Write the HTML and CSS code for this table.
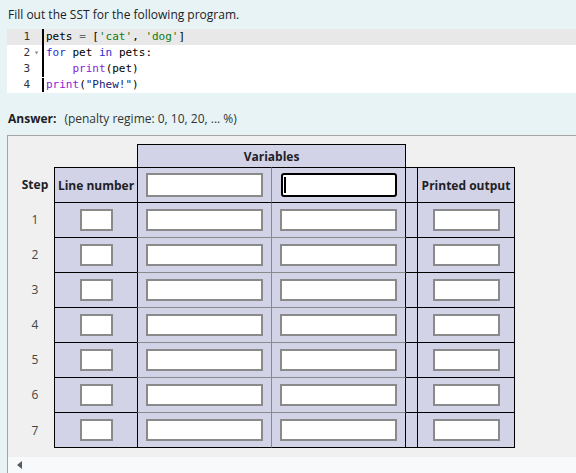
FILE: index.html
```
<!DOCTYPE html>
<html lang="en">
<head>
<meta charset="utf-8">
<title>SST question</title>
<link rel="stylesheet" href="styles.css">
</head>
<body>
<div class="page">
  <p class="prompt">Fill out the SST for the following program.</p>
  <div class="code">
    <div class="ln active"><span class="gut">1</span><span class="src"><span class="id">pets</span> <span class="op">=</span> [<span class="str">'cat'</span>, <span class="str">'dog'</span>]</span></div>
    <div class="ln"><span class="gut">2<span class="fold">▾</span></span><span class="src"><span class="kw">for</span> <span class="id">pet</span> <span class="kw">in</span> <span class="id">pets</span>:</span></div>
    <div class="ln"><span class="gut">3</span><span class="src">    <span class="fn">print</span>(pet)</span></div>
    <div class="ln last"><span class="gut">4</span><span class="src"><span class="fn">print</span>(<span class="str2">"Phew!"</span>)</span></div>
  </div>
  <div class="answer"><b>Answer:</b><span class="penalty">(penalty regime: 0, 10, 20, ... %)</span></div>
  <div class="box">
    <div class="scroller">
      <table class="sst">
        <colgroup>
          <col class="c-step"><col class="c-line"><col class="c-var"><col class="c-var2"><col class="c-gap"><col class="c-out">
        </colgroup>
        <tr class="r-top">
          <td></td><td></td><th colspan="2" class="vars">Variables</th><td></td><td></td>
        </tr>
        <tr class="r-head">
          <th class="step">Step</th>
          <th class="line">Line number</th>
          <td class="v1"><input class="in in-var in-head" type="text"></td>
          <td class="v2"><span class="focus"><input class="in in-var in-head in-focus" type="text"><span class="caret"></span></span></td>
          <td class="gap"></td>
          <th class="out">Printed output</th>
        </tr>
        <tr class="r-data first">
          <td class="step">1</td><td class="line"><input class="in in-line" type="text"></td><td class="v1"><input class="in in-var" type="text"></td><td class="v2"><input class="in in-var" type="text"></td><td class="gap"></td><td class="out"><input class="in in-out" type="text"></td>
        </tr>
        <tr class="r-data">
          <td class="step">2</td><td class="line"><input class="in in-line" type="text"></td><td class="v1"><input class="in in-var" type="text"></td><td class="v2"><input class="in in-var" type="text"></td><td class="gap"></td><td class="out"><input class="in in-out" type="text"></td>
        </tr>
        <tr class="r-data">
          <td class="step">3</td><td class="line"><input class="in in-line" type="text"></td><td class="v1"><input class="in in-var" type="text"></td><td class="v2"><input class="in in-var" type="text"></td><td class="gap"></td><td class="out"><input class="in in-out" type="text"></td>
        </tr>
        <tr class="r-data">
          <td class="step">4</td><td class="line"><input class="in in-line" type="text"></td><td class="v1"><input class="in in-var" type="text"></td><td class="v2"><input class="in in-var" type="text"></td><td class="gap"></td><td class="out"><input class="in in-out" type="text"></td>
        </tr>
        <tr class="r-data">
          <td class="step">5</td><td class="line"><input class="in in-line" type="text"></td><td class="v1"><input class="in in-var" type="text"></td><td class="v2"><input class="in in-var" type="text"></td><td class="gap"></td><td class="out"><input class="in in-out" type="text"></td>
        </tr>
        <tr class="r-data">
          <td class="step">6</td><td class="line"><input class="in in-line" type="text"></td><td class="v1"><input class="in in-var" type="text"></td><td class="v2"><input class="in in-var" type="text"></td><td class="gap"></td><td class="out"><input class="in in-out" type="text"></td>
        </tr>
        <tr class="r-data last">
          <td class="step">7</td><td class="line"><input class="in in-line" type="text"></td><td class="v1"><input class="in in-var" type="text"></td><td class="v2"><input class="in in-var" type="text"></td><td class="gap"></td><td class="out"><input class="in in-out" type="text"></td>
        </tr>
      </table>
    </div>
    <div class="hbar"><span class="arrow"></span></div>
  </div>
</div>
</body>
</html>
```

FILE: styles.css
```
html, body {
  margin: 0;
  padding: 0;
  background: #e7f3f5;
  overflow: hidden;
}
body {
  font-family: "Open Sans", "Noto Sans", sans-serif;
  font-size: 12px;
  color: #1d2125;
}
.page {
  padding: 5px 0 0 7px;
}
.prompt {
  margin: 0 0 5px 1px;
  line-height: 19px;
}
.code {
  background: #ffffff;
  margin-right: -20px;
  font-family: "DejaVu Sans Mono", "Liberation Mono", monospace;
  font-size: 11px;
  color: #000;
}
.ln {
  display: flex;
  height: 16px;
  line-height: 16px;
  white-space: pre;
}
.ln.active {
  background: #e8e8e8;
}
.gut {
  width: 23px;
  padding-right: 12px;
  text-align: right;
  color: #333;
  position: relative;
}
.fold {
  position: absolute;
  left: 27px;
  top: 0;
  font-size: 8px;
  color: #888;
}
.src {
  border-left: 2px solid #000;
  padding-left: 2px;
}
.ln.last .src {
  border-left: 0;
  padding-left: 4px;
  background: linear-gradient(#000, #000) no-repeat 0 1px / 2px 14px;
}
.op { color: #666; }
.str { color: #0b7a12; }
.str2 { color: #1a1a70; }
.kw { color: #2b2bd0; }
.fn { color: #8a22d6; }
.answer {
  margin: 16px 0 0 1px;
  line-height: 19px;
  display: flex;
  align-items: baseline;
  gap: 8px;
}
.answer b {
  font-weight: 700;
}
.penalty {
  font-size: 12px;
  color: #333;
}
.box {
  margin-top: 7px;
  margin-right: -20px;
  border-left: 1px solid #a5a5a5;
  border-top: 1px solid #a5a5a5;
  background: #f0f0f0;
}
.scroller {
  padding: 8px 0 9px 0;
}
.hbar {
  background: #f8f9fa;
  height: 20px;
  display: flex;
  align-items: center;
  padding-left: 9px;
}
.arrow {
  width: 0;
  height: 0;
  border-top: 4px solid transparent;
  border-bottom: 4px solid transparent;
  border-right: 5px solid #505a60;
  margin-top: -4px;
}
.sst {
  border-collapse: separate;
  border-spacing: 0;
  table-layout: fixed;
  width: 507px;
  font-size: 12px;
}
.c-step { width: 46px; }
.c-line { width: 83px; }
.c-var { width: 134px; }
.c-var2 { width: 135px; }
.c-gap { width: 12px; }
.c-out { width: 97px; }
.sst td, .sst th {
  padding: 0;
  text-align: center;
  vertical-align: middle;
}
.sst th {
  font-weight: 700;
  color: #1d2125;
}
.r-top td, .r-top th {
  height: 22px;
}
.vars {
  background: #d3d3e8;
  border: 1px solid #000;
  border-bottom: 0;
}
.r-head th, .r-head td {
  height: 34px;
}
.r-data td {
  height: 34px;
}
.step {
  padding-left: 8px !important;
  color: #444;
}
.r-head .step { color: #1d2125; }
.line, .v1, .v2, .gap, .out {
  background: #d3d3e8;
}
.line {
  border-left: 1px solid #000;
  border-top: 1px solid #000;
}
.v1 {
  border-left: 1px solid #000;
  border-top: 1px solid #8a8a8a;
}
.v2 {
  border-left: 1px solid #8a8a8a;
  border-right: 1px solid #000;
  border-top: 1px solid #8a8a8a;
}
.gap {
  border-top: 1px solid #000;
  border-right: 1px solid #000;
}
.out {
  border-top: 1px solid #000;
  border-right: 1px solid #000;
}
.r-head .v1, .r-head .v2, .r-data.first .v1, .r-data.first .v2 {
  border-top-color: #000;
}
.r-data.last td:not(.step) {
  border-bottom: 1px solid #000;
}
.in {
  box-sizing: border-box;
  display: block;
  margin: 0 auto;
  height: 22px;
  border: 2px solid #8a8a8a;
  background: #fff;
  padding: 0 3px;
  font: inherit;
  outline: none;
}
.in-line { width: 33px; }
.in-var { width: 117px; }
.in-out { width: 67px; }
.in-head { height: 24px; }
.focus {
  position: relative;
  display: block;
  width: 116px;
  margin: 0 auto;
}
.in-focus {
  width: 116px;
  border-color: #000;
  border-radius: 3px;
}
.caret {
  position: absolute;
  left: 3px;
  top: 4px;
  width: 2px;
  height: 16px;
  background: #000;
}
```
